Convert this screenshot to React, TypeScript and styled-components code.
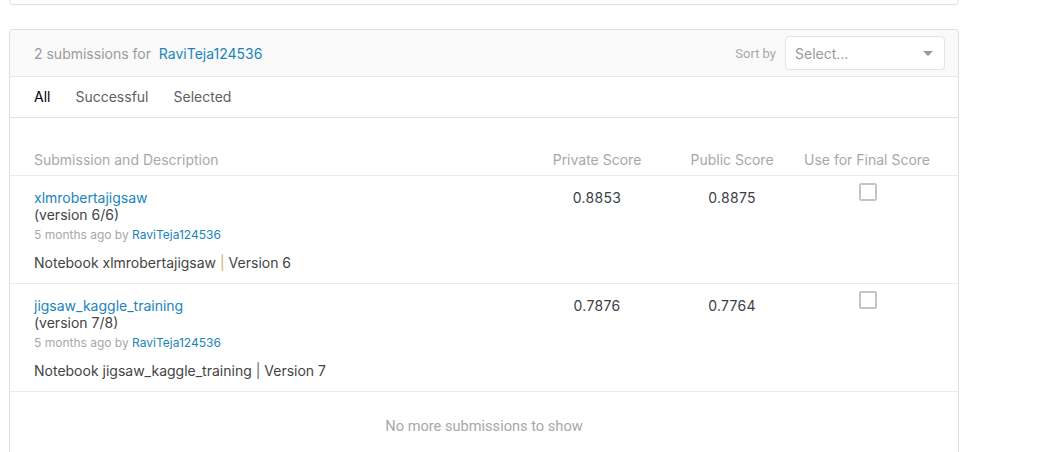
import React from "react";
import styled, { createGlobalStyle } from "styled-components";

const Global = createGlobalStyle`
  html, body { margin: 0; padding: 0; background: #fff; }
  body { font-family: Inter, "Noto Sans", sans-serif; color: #3c4043; overflow: hidden; }
  * { box-sizing: border-box; }
`;

const Page = styled.div`
  width: 1060px;
  height: 452px;
  padding-left: 9px;
  display: flex;
  flex-direction: column;
  gap: 24px;
`;

const TopCard = styled.div`
  width: 950px;
  height: 40px;
  margin-top: -35px;
  border: 1px solid #dedfe0;
  border-radius: 4px;
  background: #fff;
`;

const Card = styled.section`
  width: 950px;
  border: 1px solid #dedfe0;
  border-radius: 4px;
  background: #fff;
  overflow: hidden;
  flex: 1;
  border-bottom: none;
  border-bottom-left-radius: 0;
  border-bottom-right-radius: 0;
`;

const Header = styled.header`
  height: 47px;
  background: #fafafa;
  border-bottom: 1px solid #e6e6e6;
  display: flex;
  align-items: center;
  padding: 0 13px 0 24px;
`;

const Count = styled.div`
  font-size: 14px;
  color: #9a9a9a;
  flex: 1;
  padding-top: 1px;
`;

const Link = styled.a<{ $size?: number }>`
  color: #1a84bb;
  text-decoration: none;
  font-size: ${(p) => p.$size ?? 14}px;
`;

const SortLabel = styled.span`
  font-family: Roboto, "Liberation Sans", sans-serif;
  font-size: 13px;
  color: #a8a8a8;
  margin-right: 9px;
`;

const Select = styled.div`
  width: 160px;
  height: 34px;
  border: 1px solid #e3e3e3;
  border-radius: 4px;
  background: #fff;
  display: flex;
  align-items: center;
  justify-content: space-between;
  padding: 0 11px 0 9px;
  font-size: 14px;
  color: #9a9a9a;
`;

const Caret = styled.span`
  width: 0;
  height: 0;
  border-left: 5px solid transparent;
  border-right: 5px solid transparent;
  border-top: 5px solid #999;
`;

const Tabs = styled.nav`
  height: 41px;
  border-bottom: 1px solid #e3e3e3;
  display: flex;
  align-items: center;
  gap: 25px;
  padding: 0 24px 2px;
`;

const Tab = styled.span<{ $active?: boolean }>`
  font-size: 14px;
  color: ${(p) => (p.$active ? "#000" : "#5f5f5f")};
`;

const Grid = styled.div`
  display: grid;
  grid-template-columns: 1fr 130px 140px 130px;
  padding: 0 26px 0 24px;
`;

const HeadRow = styled(Grid)`
  height: 58px;
  align-items: end;
  padding-bottom: 7px;
  border-bottom: 1px solid #ebebeb;
  font-size: 14px;
  color: #a8a8a8;
`;

const HeadCell = styled.div<{ $center?: boolean }>`
  text-align: ${(p) => (p.$center ? "center" : "left")};
  white-space: nowrap;
`;

const Row = styled(Grid)`
  height: 108px;
  border-bottom: 1px solid #ebebeb;
  padding-top: 13px;
`;

const Info = styled.div`
  display: flex;
  flex-direction: column;
  font-size: 14px;
  line-height: 17px;
`;

const Version = styled.div`
  color: #444;
`;

const Meta = styled.div`
  font-size: 12px;
  color: #a8a8a8;
  margin-top: 3px;
`;

const Desc = styled.div`
  color: #444;
  margin-top: 11px;
`;

const Pipe = styled.span<{ $c: string }>`
  color: ${(p) => p.$c};
`;

const Score = styled.div`
  text-align: center;
  font-size: 14px;
  color: #3c4043;
  letter-spacing: 0.3px;
`;

const CheckCell = styled.div`
  display: flex;
  justify-content: center;
`;

const Check = styled.span`
  width: 18px;
  height: 18px;
  border: 2px solid #c3c5c8;
  border-radius: 2px;
  margin-top: -6px;
  margin-left: 2px;
`;

const Footer = styled.div`
  text-align: center;
  font-family: Roboto, "Liberation Sans", sans-serif;
  font-size: 14.6px;
  color: #a8a8a8;
  padding-top: 25px;
`;

const subs = [
  { title: "xlmrobertajigsaw", version: "(version 6/6)", priv: "0.8853", pub: "0.8875", v: "Version 6", pipe: "#d7a85a" },
  { title: "jigsaw_kaggle_training", version: "(version 7/8)", priv: "0.7876", pub: "0.7764", v: "Version 7", pipe: "#59667a" },
];

export default function App() {
  return (
    <Page>
      <Global />
      <TopCard />
      <Card>
        <Header>
          <Count>
            2 submissions for&nbsp; <Link href="#">RaviTeja124536</Link>
          </Count>
          <SortLabel>Sort by</SortLabel>
          <Select>
            <span>Select...</span>
            <Caret />
          </Select>
        </Header>
        <Tabs>
          <Tab $active>All</Tab>
          <Tab>Successful</Tab>
          <Tab>Selected</Tab>
        </Tabs>
        <HeadRow>
          <HeadCell>Submission and Description</HeadCell>
          <HeadCell $center>Private Score</HeadCell>
          <HeadCell $center>Public Score</HeadCell>
          <HeadCell $center>Use for Final Score</HeadCell>
        </HeadRow>
        {subs.map((s) => (
          <Row key={s.title}>
            <Info>
              <Link href="#">{s.title}</Link>
              <Version>{s.version}</Version>
              <Meta>
                5 months ago by <Link href="#" $size={12}>RaviTeja124536</Link>
              </Meta>
              <Desc>
                Notebook {s.title} <Pipe $c={s.pipe}>|</Pipe> {s.v}
              </Desc>
            </Info>
            <Score>{s.priv}</Score>
            <Score>{s.pub}</Score>
            <CheckCell>
              <Check />
            </CheckCell>
          </Row>
        ))}
        <Footer>No more submissions to show</Footer>
      </Card>
    </Page>
  );
}
